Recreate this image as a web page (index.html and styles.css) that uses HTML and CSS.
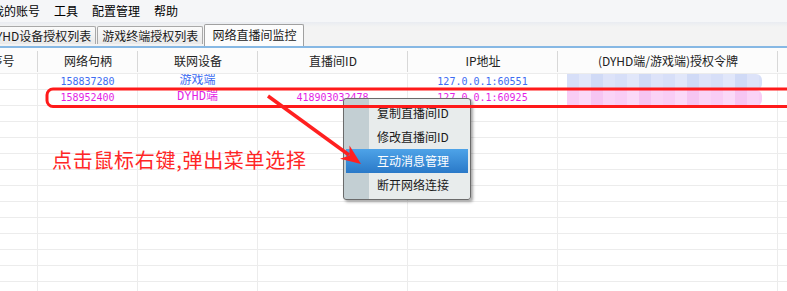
FILE: index.html
```html
<!DOCTYPE html>
<html lang="zh-CN">
<head>
    <meta charset="UTF-8">
    <title>网络直播间监控</title>
    <link rel="stylesheet" href="styles.css">
</head>
<body>
    <div class="window">
        <div class="menubar">
            <span class="menu-item">我的账号</span>
            <span class="menu-item">工具</span>
            <span class="menu-item">配置管理</span>
            <span class="menu-item">帮助</span>
        </div>

        <div class="tabs">
            <div class="tab">DYHD设备授权列表</div>
            <div class="tab">游戏终端授权列表</div>
            <div class="tab active">网络直播间监控</div>
        </div>

        <div class="grid">
            <div class="row head">
                <div class="cell">序号</div>
                <div class="cell">网络句柄</div>
                <div class="cell">联网设备</div>
                <div class="cell">直播间ID</div>
                <div class="cell">IP地址</div>
                <div class="cell">(DYHD端/游戏端)授权令牌</div>
                <div class="cell"></div>
            </div>
            <div class="row game">
                <div class="cell"></div>
                <div class="cell num">158837280</div>
                <div class="cell dev">游戏端</div>
                <div class="cell num"></div>
                <div class="cell num">127.0.0.1:60551</div>
                <div class="cell token"><div class="mosaic"></div></div>
                <div class="cell"></div>
            </div>
            <div class="row dyhd">
                <div class="cell"></div>
                <div class="cell num">158952400</div>
                <div class="cell dev">DYHD端</div>
                <div class="cell num">418903032478</div>
                <div class="cell num">127.0.0.1:60925</div>
                <div class="cell token"><div class="mosaic"></div></div>
                <div class="cell"></div>
            </div>
            <div class="row"><div class="cell"></div><div class="cell"></div><div class="cell"></div><div class="cell"></div><div class="cell"></div><div class="cell"></div><div class="cell"></div></div>
            <div class="row"><div class="cell"></div><div class="cell"></div><div class="cell"></div><div class="cell"></div><div class="cell"></div><div class="cell"></div><div class="cell"></div></div>
            <div class="row"><div class="cell"></div><div class="cell"></div><div class="cell"></div><div class="cell"></div><div class="cell"></div><div class="cell"></div><div class="cell"></div></div>
            <div class="row"><div class="cell"></div><div class="cell"></div><div class="cell"></div><div class="cell"></div><div class="cell"></div><div class="cell"></div><div class="cell"></div></div>
            <div class="row"><div class="cell"></div><div class="cell"></div><div class="cell"></div><div class="cell"></div><div class="cell"></div><div class="cell"></div><div class="cell"></div></div>
            <div class="row"><div class="cell"></div><div class="cell"></div><div class="cell"></div><div class="cell"></div><div class="cell"></div><div class="cell"></div><div class="cell"></div></div>
            <div class="row"><div class="cell"></div><div class="cell"></div><div class="cell"></div><div class="cell"></div><div class="cell"></div><div class="cell"></div><div class="cell"></div></div>
            <div class="row"><div class="cell"></div><div class="cell"></div><div class="cell"></div><div class="cell"></div><div class="cell"></div><div class="cell"></div><div class="cell"></div></div>
            <div class="row"><div class="cell"></div><div class="cell"></div><div class="cell"></div><div class="cell"></div><div class="cell"></div><div class="cell"></div><div class="cell"></div></div>
            <div class="row"><div class="cell"></div><div class="cell"></div><div class="cell"></div><div class="cell"></div><div class="cell"></div><div class="cell"></div><div class="cell"></div></div>
            <div class="row"><div class="cell"></div><div class="cell"></div><div class="cell"></div><div class="cell"></div><div class="cell"></div><div class="cell"></div><div class="cell"></div></div>
            <div class="row"><div class="cell"></div><div class="cell"></div><div class="cell"></div><div class="cell"></div><div class="cell"></div><div class="cell"></div><div class="cell"></div></div>
        </div>
    </div>

    <!-- right-click menu -->
    <div class="context-menu">
        <div class="menu-entry">复制直播间ID</div>
        <div class="menu-entry">修改直播间ID</div>
        <div class="menu-entry selected">互动消息管理</div>
        <div class="menu-entry">断开网络连接</div>
    </div>

    <!-- annotation drawn over the screenshot -->
    <div class="note">点击鼠标右键,弹出菜单选择</div>
    <svg class="marks" width="787" height="291" viewBox="0 0 787 291">
        <rect x="47" y="89" width="800" height="17.5" rx="6" fill="none" stroke="#ff1a1a" stroke-width="3"/>
        <line x1="268" y1="96" x2="349" y2="155" stroke="#ff2020" stroke-width="3.5"/>
        <polygon points="361,164 349.5,145.5 349.5,155.5 340,158.7" fill="#ff2020"/>
    </svg>
</body>
</html>
```

FILE: styles.css
```css
html, body {
    margin: 0;
    padding: 0;
    overflow: hidden;
}

body {
    position: relative;
    width: 787px;
    height: 291px;
    background: #ffffff;
    color: #1a1a1a;
    font-family: "Noto Sans CJK SC", sans-serif;
    font-size: 12px;
}

/* the window is scrolled a little to the right */
.window {
    margin-left: -33px;
    width: 900px;
}

.menubar {
    display: flex;
    height: 22px;
    line-height: 22px;
    padding-left: 18px;
    background: #f5f6f8;
    color: #000;
}

.menu-item {
    padding: 0 7px;
}

.tabs {
    display: flex;
    align-items: flex-end;
    gap: 1px;
    height: 24px;
    padding-left: 16px;
    background: linear-gradient(#e9ecf1 0, #f3f3f3 5px);
    border-bottom: 2px solid #86b8e4;
}

.tab {
    height: 17px;
    line-height: 17px;
    padding: 0 4px;
    margin-bottom: 2px;
    border: 1px solid #a9a9a9;
    border-bottom: none;
    border-radius: 2px 2px 0 0;
    background: linear-gradient(#fbfbfb, #e9e9e9);
    white-space: nowrap;
}

.tab.active {
    height: 21px;
    line-height: 20px;
    padding: 0 7px;
    margin-bottom: 0;
    border-color: #a0a0a0;
    background: #fcfcfc;
}

.row {
    display: grid;
    grid-template-columns: 71px 100px 120px 150px 150px 220px 89px;
}

.cell {
    box-sizing: border-box;
    height: 16px;
    line-height: 15px;
    text-align: center;
    white-space: nowrap;
    overflow: hidden;
    border-right: 1px solid #ececec;
    border-bottom: 1px solid #ececec;
}

.head .cell {
    height: 26px;
    line-height: 25px;
    color: #222;
    border-right: none;
    background: linear-gradient(#d8d8d8, #d8d8d8) right 0 top 3px / 1px 21px no-repeat, #fcfcfc;
}

.num {
    font-family: "DejaVu Sans Mono", monospace;
    font-size: 10px;
}

.dev {
    font-family: "Liberation Mono", "Noto Sans CJK SC", monospace;
}

.game .cell {
    color: #3d6cf2;
}

.dyhd .cell {
    color: #e41ee4;
}

.token {
    text-align: left;
}

/* pixelated blur hiding the token */
.mosaic {
    width: 195px;
    height: 16px;
    margin-left: 9px;
    border-radius: 0 6px 6px 0;
}

.game .mosaic {
    background: repeating-linear-gradient(90deg, #d7dff8 0 12px, #e1e7fa 12px 24px, #d0daf6 24px 36px, #dde3f9 36px 48px);
}

.dyhd .mosaic {
    background: repeating-linear-gradient(90deg, #f9cdf5 0 12px, #fbd9f8 12px 24px, #f6c5f2 24px 36px, #fad3f6 36px 48px);
}

.context-menu {
    position: absolute;
    left: 343px;
    top: 98px;
    width: 128px;
    box-sizing: border-box;
    padding: 2px;
    border: 1px solid #6b6b6b;
    border-radius: 3px;
    background: linear-gradient(90deg, #c3cfd3 0 25px, #e8ecec 25px);
    box-shadow: 2px 2px 3px rgba(0, 0, 0, 0.35);
}

.menu-entry {
    height: 24px;
    line-height: 24px;
    padding-left: 31px;
    color: #1a1a1a;
}

.menu-entry.selected {
    color: #ffffff;
    background: linear-gradient(#4ea3e8, #2a79c8);
}

.note {
    position: absolute;
    left: 52px;
    top: 148px;
    font-size: 20px;
    line-height: 24px;
    letter-spacing: 0.7px;
    color: #ff2626;
    white-space: nowrap;
}

.marks {
    position: absolute;
    left: 0;
    top: 0;
    pointer-events: none;
}
```
